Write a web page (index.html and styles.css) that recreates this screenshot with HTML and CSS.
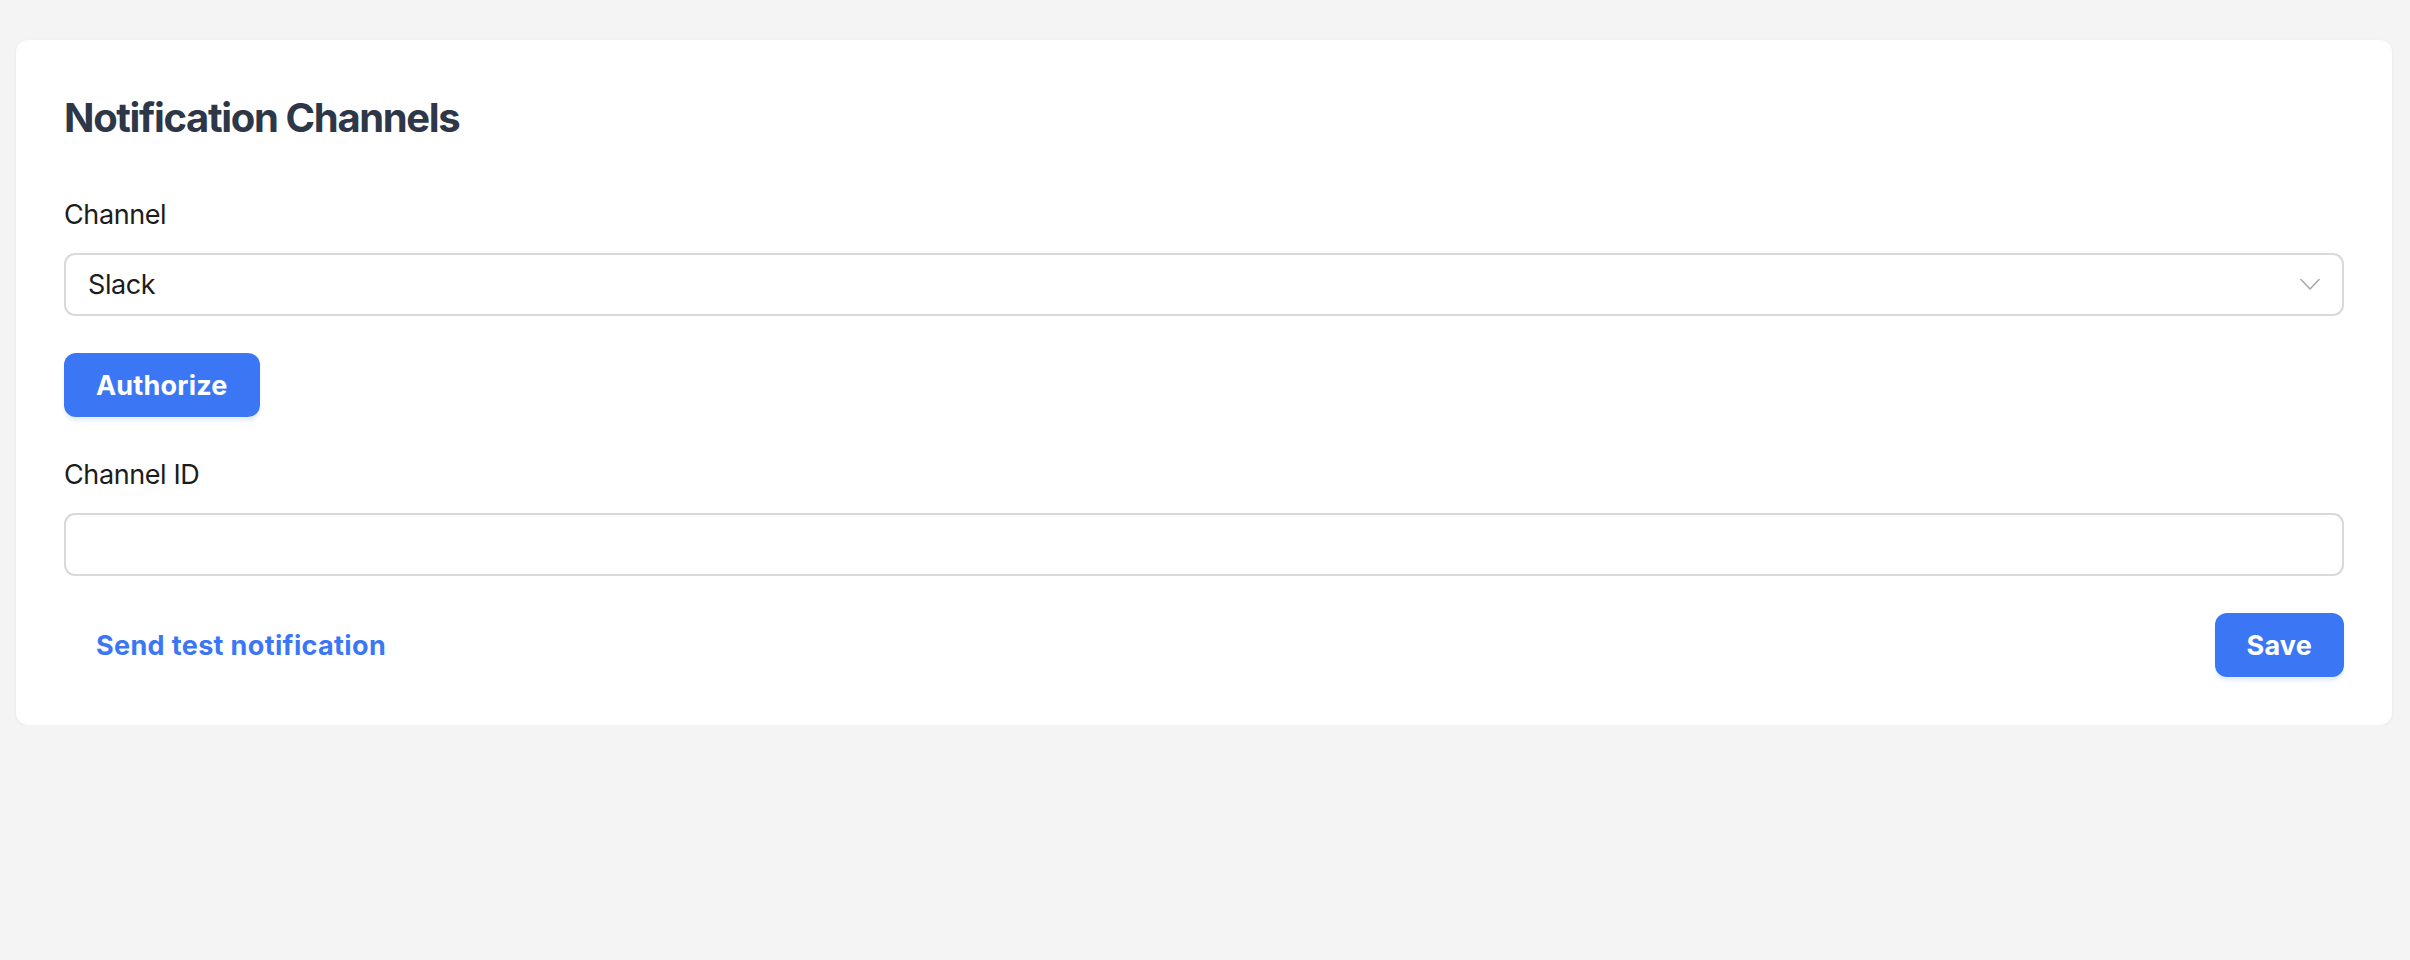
FILE: index.html
```html
<!DOCTYPE html>
<html lang="en">
<head>
<meta charset="utf-8">
<title>Notification Channels</title>
<link rel="stylesheet" href="styles.css">
</head>
<body>
  <main class="page">
    <section class="card">
      <h1 class="title">Notification Channels</h1>

      <label class="label">Channel</label>
      <div class="select">
        <span class="select-value">Slack</span>
        <svg class="chevron" width="20" height="13" viewBox="0 0 20 13" aria-hidden="true">
          <path d="M1 1.5 L10 11 L19 1.5" fill="none" stroke="#a9a9a9" stroke-width="1.6" stroke-linecap="round" stroke-linejoin="round"/>
        </svg>
      </div>

      <div class="auth-row">
        <button class="btn btn-primary">Authorize</button>
      </div>

      <label class="label">Channel ID</label>
      <div class="input"></div>

      <div class="actions">
        <button class="btn btn-link">Send test notification</button>
        <button class="btn btn-primary">Save</button>
      </div>
    </section>
  </main>
</body>
</html>
```

FILE: styles.css
```css
* { box-sizing: border-box; }

html, body {
  margin: 0;
  padding: 0;
  background: #f4f4f4;
  font-family: Inter, "Noto Sans", "Liberation Sans", sans-serif;
}

.page {
  padding: 40px 18px 0 16px;
}

.card {
  background: #ffffff;
  border-radius: 12px;
  padding: 49px 48px 48px;
  box-shadow: 0 1px 3px rgba(30, 40, 60, 0.08);
  display: flex;
  flex-direction: column;
}

.title {
  margin: 0 0 50px;
  font-size: 40px;
  line-height: 58px;
  font-weight: 700;
  color: #2d3748;
  letter-spacing: -1.35px;
}

.label {
  display: block;
  font-size: 27px;
  line-height: 36px;
  color: #1c1c1c;
  margin-bottom: 20px;
  letter-spacing: -0.4px;
}

.select, .input {
  height: 63px;
  border: 2px solid #d9d9d9;
  border-radius: 11px;
  background: #fff;
}

.select {
  display: flex;
  align-items: center;
  justify-content: space-between;
  padding: 0 22px 0 22px;
}

.select-value {
  font-size: 27px;
  color: #1c1c1c;
  letter-spacing: -0.4px;
}

.chevron { display: block; }

.auth-row {
  margin: 37px 0 40px;
  display: flex;
}

.btn {
  font-family: inherit;
  font-size: 27px;
  font-weight: 700;
  height: 64px;
  border: none;
  border-radius: 12px;
  padding: 0 32px;
  cursor: pointer;
  letter-spacing: 0.2px;
}

.btn-primary {
  background: #3b77f5;
  color: #ffffff;
  box-shadow: 0 4px 3px rgba(59, 119, 245, 0.12);
}

.btn-link {
  background: transparent;
  color: #3b77f5;
  letter-spacing: 0.35px;
}

.actions {
  margin-top: 37px;
  display: flex;
  justify-content: space-between;
  align-items: center;
}
```
